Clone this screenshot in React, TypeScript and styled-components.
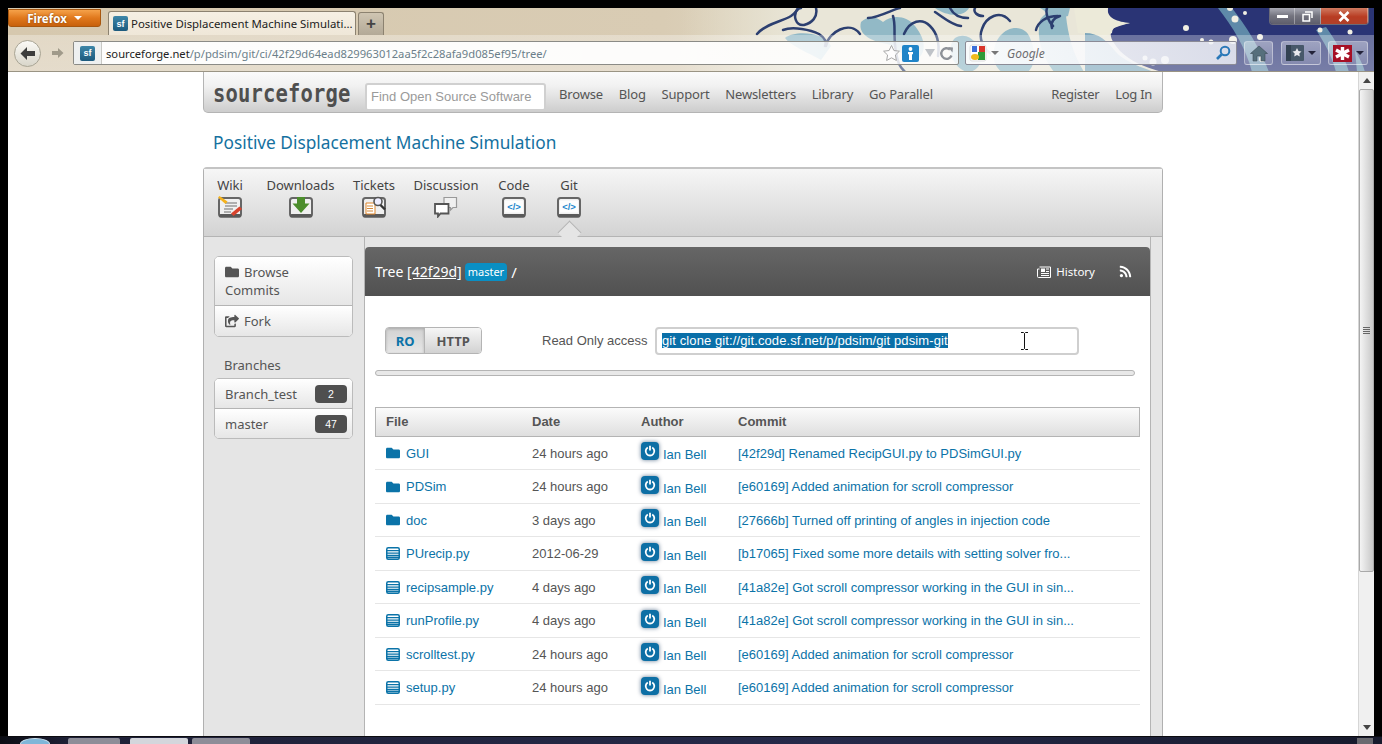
import React from "react";
import styled, { createGlobalStyle } from "styled-components";
import { FaFolder, FaShareSquare, FaRss } from "react-icons/fa";

const Global = createGlobalStyle`
  html, body { margin: 0; padding: 0; width: 1382px; height: 744px; overflow: hidden; background: #000; }
  * { box-sizing: border-box; }
  #root { height: 744px; }
`;
const UB = `"Noto Sans", "Open Sans", sans-serif`;
const AR = `"Liberation Sans", Arial, sans-serif`;

const Frame = styled.div`display:flex;flex-direction:column;height:744px;padding:8px 8px 0;background:#000;`;
const Chrome = styled.header`position:relative;height:64px;flex:none;overflow:hidden;
  background:linear-gradient(90deg,#d6c8ae 0,#d9ccb4 48%,#e0d8c4 58%,#e8e5d6 100%);`;
const Wave = styled.svg`position:absolute;inset:0;width:1366px;height:64px;`;
const TabRow = styled.div`position:relative;display:flex;align-items:flex-start;height:27px;`;
const FirefoxBtn = styled.div`width:93px;height:18px;margin-top:1px;border-radius:0 0 3px 3px;border:1px solid #a8570f;
  background:linear-gradient(#f5a24a,#e0781c 50%,#c8610c);color:#fff;font:bold 11.5px ${UB};display:flex;align-items:center;justify-content:center;gap:7px;
  text-shadow:0 0 2px #7a3d05;`;
const Caret = styled.span<{ $c?: string }>`display:inline-block;width:0;height:0;border-left:4px solid transparent;border-right:4px solid transparent;border-top:4px solid ${p => p.$c || "#fff"};`;
const Tab = styled.div`width:248px;height:24px;margin:3px 0 0 7px;border:1px solid #8c8270;border-bottom:0;border-radius:3px 3px 0 0;
  background:linear-gradient(#f6f0e4,#efe7d8);display:flex;align-items:center;padding-left:4px;gap:3px;font:11.4px ${UB};color:#222;white-space:nowrap;overflow:hidden;`;
const Fav = styled.span`width:15px;height:15px;border-radius:2px;background:linear-gradient(#3d86a8,#1c5a7d);
  color:#fff;font:bold 9px ${AR};display:inline-flex;align-items:center;justify-content:center;flex:none;`;
const NewTab = styled.div`width:26px;height:23px;margin:4px 0 0 2px;border:1px solid #8c8270;border-bottom:0;border-radius:3px 3px 0 0;
  background:linear-gradient(#cfc5b2,#b3a997);color:#444;font:bold 17px ${AR};display:flex;align-items:center;justify-content:center;`;
const WinCtl = styled.div`margin-left:auto;margin-right:5px;width:100px;height:17px;display:flex;border:1px solid #6b6b78;border-top:0;border-radius:0 0 4px 4px;overflow:hidden;`;
const WinBtn = styled.div<{ $w: number; $close?: boolean }>`width:${p => p.$w}px;display:flex;align-items:center;justify-content:center;border-right:1px solid rgba(255,255,255,.35);
  background:${p => p.$close ? "linear-gradient(#d07a60,#b83c22 55%,#b0402a)" : "linear-gradient(#a8a9b4,#74747f 50%,#5e5e6c)"};`;
const NavRow = styled.div`position:relative;height:37px;display:flex;align-items:center;padding:0 7px 0 6px;
  background:linear-gradient(rgba(255,255,255,.3),rgba(255,255,255,.36));border-bottom:1px solid #9a9484;`;
const BackBtn = styled.div`width:27px;height:27px;border-radius:50%;border:1px solid #a9a595;background:linear-gradient(#fbfaf6,#d9d6ca);display:flex;align-items:center;justify-content:center;flex:none;`;
const Forward = styled.div`width:32px;display:flex;justify-content:center;flex:none;`;
const UrlBar = styled.div`width:886px;height:24px;flex:none;border:1px solid #8b8b86;border-radius:2px;background:linear-gradient(90deg,rgba(255,255,255,.95) 0,rgba(255,255,255,.92) 70%,rgba(255,255,255,.78) 85%,rgba(255,255,255,.78) 100%);display:flex;align-items:center;`;
const FavBox = styled.div`width:28px;height:22px;display:flex;align-items:center;justify-content:center;border-right:1px solid #c8c8c4;background:#eef0f0;flex:none;`;
const UrlText = styled.div`margin-left:4px;font:11.2px ${UB};color:#6b7f8a;white-space:nowrap;b{font-weight:400;color:#222;}`;
const UrlTools = styled.div`margin-left:auto;display:flex;align-items:center;gap:1px;padding-right:3px;`;
const SearchBar = styled.div`width:272px;height:24px;margin-left:6px;flex:none;border:1px solid #8b8b96;border-radius:2px;background:linear-gradient(90deg,rgba(255,255,255,.9),rgba(240,242,248,.82));display:flex;align-items:center;padding:0 3px;`;
const SearchLabel = styled.span`font:italic 12px ${UB};color:#6d6d70;margin-left:8px;`;
const ToolBtn = styled.div<{ $w: number; $ml: number }>`width:${p => p.$w}px;height:24px;margin-left:${p => p.$ml}px;flex:none;border:1px solid rgba(255,255,255,.38);border-radius:3px;background:linear-gradient(rgba(255,255,255,.34),rgba(255,255,255,.12));display:flex;align-items:center;justify-content:center;gap:4px;`;

const Viewport = styled.div`flex:1;display:flex;min-height:0;`;
const PageArea = styled.main`flex:1;background:#fff;overflow:hidden;min-width:0;`;
const Container = styled.div`width:960px;margin:0 auto;height:100%;display:flex;flex-direction:column;`;
const SiteBar = styled.div`height:41px;flex:none;display:flex;align-items:center;padding:9px 10px 0 9px;border:1px solid #b4b4b4;border-top:0;border-radius:0 0 5px 5px;
  background:linear-gradient(#fbfbfb,#f1f1f1 35%,#cdcdcd);`;
const Logo = styled.div`width:140px;flex:none;font:bold 20.5px "DejaVu Sans Mono",monospace;letter-spacing:.15px;color:#4f4f4f;transform:scaleY(1.25);white-space:nowrap;line-height:1;margin-top:-7px;`;
const SearchInput = styled.div`width:181px;height:28px;margin-left:12px;flex:none;border:2px solid #d0d0d0;border-radius:3px;background:#fff;font:13px ${AR};color:#9a9a9a;display:flex;align-items:center;padding-left:4px;white-space:nowrap;`;
const SiteNav = styled.nav`display:flex;margin:-5px 0 0 13px;font:13px ${UB};letter-spacing:-.15px;color:#555;gap:15.7px;white-space:nowrap;`;
const SiteNavRight = styled(SiteNav)`margin-left:auto;gap:16px;letter-spacing:-.3px;`;
const Title = styled.h1`margin:0;height:54px;flex:none;padding:18px 0 0 10px;font:400 17.3px/24px ${UB};color:#15719f;white-space:nowrap;`;
const Panel = styled.section`flex:1;display:flex;flex-direction:column;min-height:0;border:1px solid #b0b0b0;border-bottom:0;border-radius:4px 4px 0 0;border-top:2px solid #c4c4c4;`;
const ToolBar = styled.div`position:relative;height:68px;flex:none;display:flex;padding-left:1px;border-bottom:1px solid #b4b4b4;background:linear-gradient(#f6f6f6,#d3d3d3);`;
const ToolTab = styled.div<{ $w: number }>`width:${p => p.$w}px;display:flex;flex-direction:column;align-items:center;padding-top:8px;font:13px/16px ${UB};color:#444;gap:3px;white-space:nowrap;`;
const Notch = styled.div`position:absolute;left:357px;top:55px;width:17px;height:17px;transform:rotate(45deg);background:#e5e5e5;border-left:1px solid #b4b4b4;border-top:1px solid #b4b4b4;`;
const PanelBody = styled.div`flex:1;display:flex;min-height:0;background:#e5e5e5;`;
const Side = styled.aside`width:161px;flex:none;padding:19px 11px 0 10px;display:flex;flex-direction:column;border-right:1px solid #b4b4b4;`;
const SideBox = styled.div`border:1px solid #bbb;border-radius:5px;overflow:hidden;background:#fff;`;
const SideItem = styled.div<{ $pr?: number }>`padding:6px ${p => p.$pr ?? 10}px 6px 10px;font:13px/18px ${UB};color:#555;background:linear-gradient(#fff,#e6e6e6);border-top:1px solid #b4b4b4;&:first-child{border-top:0;}
  svg{vertical-align:-2px;margin-right:5px;color:#555;}`;
const SideLabel = styled.div`font:13px/18px ${UB};color:#555;margin:19px 0 4px 10px;`;
const BranchItem = styled.div`height:30px;padding:0 5px 0 10px;display:flex;align-items:center;justify-content:space-between;font:13px ${UB};color:#555;background:linear-gradient(#fff,#e6e6e6);border-top:1px solid #b4b4b4;&:first-child{border-top:0;height:29px;}`;
const Badge = styled.span`width:32px;height:18px;border-radius:4px;background:#4f4f4f;color:#fff;font:10.5px ${AR};display:flex;align-items:center;justify-content:center;`;
const Main = styled.div`width:785px;flex:none;margin-top:10px;background:#fff;border-radius:4px 4px 0 0;display:flex;flex-direction:column;`;
const MainHead = styled.div`height:49px;flex:none;display:flex;align-items:center;padding:0 18px 0 10px;border-radius:4px 4px 0 0;background:linear-gradient(#666,#515151);color:#fff;font:14px ${UB};white-space:pre;`;
const Ref = styled.span`text-decoration:underline;`;
const MasterTag = styled.span`margin:0 4px 0 3px;height:18px;padding:0 3px;border-radius:4px;background:#0a8fc4;font:11px/18px ${UB};display:inline-block;`;
const Slash = styled.span`font-size:15px;`;
const History = styled.span`margin-left:auto;display:flex;align-items:center;gap:5px;font:11.5px ${UB};`;
const RssWrap = styled.span`margin-left:24px;display:flex;`;
const Gutter = styled.div`flex:1;border-left:1px solid #b4b4b4;`;
const CloneRow = styled.div`display:flex;align-items:center;margin:30px 0 0 20px;height:29px;`;
const BtnGroup = styled.div`display:flex;width:97px;height:27px;border:1px solid #b4b4b4;border-radius:4px;overflow:hidden;font:bold 13px ${UB};`;
const Toggle = styled.div<{ $on?: boolean }>`display:flex;align-items:center;justify-content:center;width:${p => p.$on ? 40 : 57}px;
  color:${p => p.$on ? "#0b73a8" : "#555"};background:${p => p.$on ? "linear-gradient(#d2d2d2,#e6e6e6)" : "linear-gradient(#f6f6f6,#d2d2d2)"};${p => p.$on ? "border-right:1px solid #b4b4b4;box-shadow:inset 0 1px 3px rgba(0,0,0,.2);" : ""}`;
const CloneLabel = styled.span`margin-left:60px;font:13px ${AR};color:#555;white-space:nowrap;width:113px;`;
const CloneInput = styled.div`position:relative;width:424px;height:28px;border:2px solid #cfcfcf;border-radius:4px;background:#fff;display:flex;align-items:center;padding-left:5px;`;
const Selected = styled.span`background:#0a6fa8;color:#fff;font:13px/15px ${AR};white-space:nowrap;letter-spacing:.1px;`;
const IBeam = styled.svg`position:absolute;left:363px;top:3px;`;
const Bar = styled.div`margin:15px 15px 0 10px;height:6px;border:1px solid #b4b4b4;border-radius:3px;background:#e8e8e8;flex:none;`;
const Table = styled.div`margin:31px 10px 0 10px;display:flex;flex-direction:column;`;
const cols = `grid-template-columns:146px 109px 97px 1fr;`;
const HeadRow = styled.div`display:grid;${cols}height:30px;padding-bottom:2px;border:1px solid #b4b4b4;background:linear-gradient(#fbfbfb,#dfdfdf);align-items:center;font:bold 13px ${AR};color:#555;`;
const HeadCell = styled.div`padding-left:10px;`;
const Row = styled.div<{ $h: number }>`display:grid;${cols}height:${p => p.$h}px;border-bottom:1px solid #e6e6e6;align-items:center;font:13px ${AR};padding-left:1px;`;
const NameCell = styled.div`display:flex;align-items:center;gap:6px;padding-left:10px;color:#0b73a8;svg{flex:none;}`;
const DateCell = styled.div`padding-left:10px;color:#555;`;
const AuthorCell = styled.div`display:flex;align-items:flex-start;padding-left:10px;color:#0b73a8;gap:4px;`;
const Avatar = styled.span`width:18px;height:18px;border-radius:4px;background:#0d6fa5;box-shadow:0 0 4px rgba(0,40,80,.6);display:flex;align-items:center;justify-content:center;flex:none;margin-top:-2px;`;
const AuthorName = styled.span`margin-top:4px;line-height:14px;`;
const CommitCell = styled.div`padding-left:10px;color:#0b73a8;white-space:nowrap;`;
const Scroll = styled.div`width:16px;flex:none;background:#f0f0f0;border-left:1px solid #d6d6d6;display:flex;flex-direction:column;align-items:center;`;
const ScrollCap = styled.div`height:17px;flex:none;display:flex;align-items:center;justify-content:center;`;
const Thumb = styled.div`width:15px;height:483px;flex:none;border:1px solid #a9a9a9;border-radius:2px;background:linear-gradient(90deg,#f4f4f4,#dcdcdc 55%,#c8c8c8);display:flex;align-items:center;justify-content:center;`;
const Track = styled.div`flex:1;`;
const Grip = styled.span`width:7px;height:7px;background:repeating-linear-gradient(#666 0 1px,transparent 1px 2px);`;
const Taskbar = styled.footer`height:8px;flex:none;margin:0 -8px;padding-left:8px;background:linear-gradient(90deg,#0b0d14 0,#1e2036 5%,#262a4a 60%,#171a2c 100%);border-top:1px solid #0c0c10;display:flex;align-items:flex-start;position:relative;`;
const Orb = styled.div`width:30px;height:12px;margin:1px 0 0 12px;border-radius:50% 50% 0 0;background:#7fb6d8;border:1px solid #cfe3ef;flex:none;`;
const TaskBtn = styled.div<{ $w: number; $ml: number; $on?: boolean }>`width:${p => p.$w}px;height:6px;margin:1px 0 0 ${p => p.$ml}px;flex:none;border-radius:2px 2px 0 0;background:${p => p.$on ? "#d4d6dc" : "#8d8d98"};`;
const TaskEnd = styled.div`margin:1px 9px 0 auto;width:16px;height:6px;background:#6a6a70;`;

const Ic = { display: "block" } as const;

const TabFrame = ({ children }: { children: React.ReactNode }) => (
  <svg width="24" height="22" viewBox="0 0 24 22" style={Ic}>
    <rect x="1" y="2" width="22" height="18.500" rx="2.500" fill="#f0f0f0" stroke="#666" strokeWidth="2" />
    <rect x="1" y="18" width="22" height="3.500" rx="1.500" fill="#5a5a5a" />
    {children}
  </svg>
);
const WikiIcon = () => (
  <TabFrame>
    <path d="M7 7h12M7 10h12M6 13h9M6 16h7" stroke="#999" strokeWidth="1.500" />
    <path d="M0 1.500l1.500-1.500 8 5.500-2 2.500z" fill="#f5b21c" />
    <path d="M13 17.500l8.500-7 2.500 2.500-8.500 7z" fill="#d8432d" />
  </TabFrame>
);
const DlIcon = () => (
  <TabFrame>
    <path d="M8 1h8v6.500h4.500L12 17 3.500 7.500H8z" fill="#4c8d2c" />
  </TabFrame>
);
const TicketIcon = () => (
  <TabFrame>
    <path d="M4 7h9v11H4z" fill="#fff" stroke="#e0862a" strokeWidth="1" />
    <path d="M5 10h6M5 12.500h6M5 15h6" stroke="#d68a3a" strokeWidth="1.200" />
    <circle cx="16" cy="5.500" r="4" fill="#eef" stroke="#555" strokeWidth="1.600" />
    <path d="M18.500 9l4.500 4.500" stroke="#333" strokeWidth="2.400" />
  </TabFrame>
);
const ChatIcon = () => (
  <svg width="24" height="22" viewBox="0 0 24 22" style={Ic}>
    <path d="M10 1.500h12.500v10h-3.500l-2.500 2.500v-2.500h-6.500z" fill="#f0f0f0" stroke="#999" strokeWidth="1.200" />
    <path d="M1 8h13.500v9.500h-8l-2.500 3v-3h-3z" fill="#fff" stroke="#555" strokeWidth="1.800" />
  </svg>
);
const CodeIcon = () => (
  <TabFrame>
    <rect x="3" y="4.500" width="18" height="12" fill="#fdfdfd" />
    <text x="12" y="14" textAnchor="middle" fontFamily="Liberation Sans" fontWeight="700" fontSize="9.500" fill="#1a86cc">&lt;/&gt;</text>
  </TabFrame>
);
const FileIcon = () => (
  <svg width="14" height="13" viewBox="0 0 14 13" style={Ic}>
    <rect x=".75" y=".75" width="12.500" height="11.500" rx="1.500" fill="#fff" stroke="#0b73a8" strokeWidth="1.500" />
    <path d="M1 3.700h12M1 6.200h12M1 8.500h12M1 10.500h12" stroke="#0b73a8" strokeWidth="1.300" />
  </svg>
);
const Power = () => (
  <svg width="12" height="12" viewBox="0 0 12 12" style={Ic}>
    <path d="M3.800 2.500a4.300 4.300 0 1 0 4.400 0" fill="none" stroke="#fff" strokeWidth="1.800" />
    <path d="M6 .8v4.600" stroke="#fff" strokeWidth="1.800" />
  </svg>
);
const HistoryIcon = () => (
  <svg width="14" height="12" viewBox="0 0 14 12" style={Ic}>
    <path d="M2.500 1h11v10.500h-12a1 1 0 0 1-1-1V3h2" fill="none" stroke="#fff" />
    <rect x="4" y="2.500" width="4" height="3.500" fill="#fff" />
    <path d="M9 3h3M9 5.500h3M4 7.500h8M4 9.500h8" stroke="#fff" />
  </svg>
);

type Entry = { n: string; dir?: boolean; d: string; c: string; h: number };
const rows: Entry[] = [
  { n: "GUI", dir: true, d: "24 hours ago", c: "[42f29d] Renamed RecipGUI.py to PDSimGUI.py", h: 33 },
  { n: "PDSim", dir: true, d: "24 hours ago", c: "[e60169] Added animation for scroll compressor", h: 34 },
  { n: "doc", dir: true, d: "3 days ago", c: "[27666b] Turned off printing of angles in injection code", h: 33 },
  { n: "PUrecip.py", d: "2012-06-29", c: "[b17065] Fixed some more details with setting solver fro...", h: 34 },
  { n: "recipsample.py", d: "4 days ago", c: "[41a82e] Got scroll compressor working in the GUI in sin...", h: 33 },
  { n: "runProfile.py", d: "4 days ago", c: "[41a82e] Got scroll compressor working in the GUI in sin...", h: 34 },
  { n: "scrolltest.py", d: "24 hours ago", c: "[e60169] Added animation for scroll compressor", h: 33 },
  { n: "setup.py", d: "24 hours ago", c: "[e60169] Added animation for scroll compressor", h: 34 },
];

const WaveArt = () => (
  <Wave viewBox="8 8 1366 64" preserveAspectRatio="none">
    <defs>
      <linearGradient id="fade" x1="0" x2="1"><stop offset="0" stopColor="#e6e1cf" stopOpacity="0" /><stop offset="1" stopColor="#e9e6d8" /></linearGradient>
    </defs>
    <rect x="680" y="8" width="120" height="64" fill="url(#fade)" />
    <rect x="800" y="8" width="340" height="64" fill="#e9e6d8" />
    <g fill="#92b9c6">
      <path d="M861 22c8-8 18-4 22 0 10-8 24-6 32 4 8 10 14 24 2 34-8 4-20-14-30-16-12-2-30-8-26-22z" />
      <path d="M935 8c14 10 30 8 34 0z" />
      <path d="M955 38c14-8 26 8 26 20 0 8-6 14-14 14-14-4-22-24-12-34z" />
      <path d="M1000 36c10-12 26-10 30 2 6 14 6 26-2 34h-26c-12-8-10-26-2-36z" />
      <path d="M1040 20c4-8 16-12 26-4 2 18 6 36 18 56h-30c-12-16-18-34-14-52z" />
      <path d="M1040 8c8 4 10 14 28 8l2-8z" />
      <path d="M785 38c10-8 40-6 46 8l-10 14c-14-8-30-14-36-22z" />
    </g>
    <path d="M1108 8c-2 8 4 14 10 16l12-1c-8 2-14 4-18 6-4 8 2 14 8 22 10 10 24 16 42 21h212V8z" fill="#2a3475" />
    <path d="M1074 8h34c-2 10 10 14 22 15-10 2-18 3-18 10l-8 4-26-4z" fill="#ecead9" />
    <path d="M1085 33c14 0 22 8 30 18 8 10 30 18 40 21h-70z" fill="#7ea7bc" />
    <path d="M1218 8h14c14 18 28 40 37 64h-17c-6-24-20-46-34-64z" fill="#5f8aa9" />
    <path d="M1316 30l10-3c10 14 18 28 23 45h-13c-4-16-12-30-20-42z" fill="#5f8aa9" />
    <path d="M1355 50c4 8 8 14 10 22h-8z" fill="#5f8aa9" />
    <g fill="#f1efe3">
      <circle cx="1186" cy="28" r="3" /><circle cx="1235" cy="19" r="3.500" /><circle cx="1211" cy="42" r="2.500" /><circle cx="1202" cy="40" r="2" />
      <circle cx="1320" cy="30" r="2.500" /><circle cx="1350" cy="32" r="2.500" /><circle cx="1245" cy="13" r="2" />
      <circle cx="1260" cy="37" r="3" /><circle cx="1233" cy="40" r="4" /><circle cx="1262" cy="59" r="3" />
      <circle cx="1165" cy="60" r="4" /><circle cx="1153" cy="62" r="3.500" /><circle cx="1145" cy="58" r="2.500" />
      <circle cx="1230" cy="8" r="3" />
    </g>
    <g fill="none" stroke="#2c3f70" strokeWidth="2.500" strokeLinecap="round">
      <path d="M757 34c8-10 24-12 34-18 6-4 6-8 10-8" />
      <path d="M798 8c-6 8-2 18 6 17 8-2 14-8 12-17" />
      <path d="M826 46c2-14 24-26 34-12" />
      <path d="M783 30c10-4 28 0 36 4 6 4 8 8 6 12" />
      <path d="M868 18c10 0 28-10 32-10" />
      <path d="M893 16c4 12-2 26 6 48 2 4 4 6 6 8" />
      <path d="M904 34c6-14 18-16 26-8 6 6 10 16 8 30" />
      <path d="M950 8c4 8 12 10 18 10M975 8c-2 4 2 8 8 8" />
      <path d="M1010 21c-10-12-24-4-28 8-4 10 2 20 8 24" />
      <path d="M1036 30c2-8 10-14 22-14M1052 28c-2-6 2-10 8-12" />
      <path d="M935 12c6 4 18 14 26 14" />
      <path d="M1047 8c-2 6 2 14 6 18" />
    </g>
  </Wave>
);

export default function App() {
  return (
    <>
      <Global />
      <Frame>
        <Chrome>
          <WaveArt />
          <TabRow>
            <FirefoxBtn>Firefox <Caret /></FirefoxBtn>
            <Tab><Fav>sf</Fav>Positive Displacement Machine Simulati...</Tab>
            <NewTab>+</NewTab>
            <WinCtl>
              <WinBtn $w={26}>
                <svg width="11" height="4"><rect width="11" height="3" y="1" fill="#fff" /></svg>
              </WinBtn>
              <WinBtn $w={26}>
                <svg width="11" height="11" viewBox="0 0 11 11"><path d="M3 1h7v6M1 3.500h6.500V10H1z" fill="none" stroke="#fff" strokeWidth="1.500" /></svg>
              </WinBtn>
              <WinBtn $w={48} $close>
                <svg width="12" height="11" viewBox="0 0 12 11"><path d="M1.500 1l9 9M10.500 1l-9 9" stroke="#fff" strokeWidth="2.600" /></svg>
              </WinBtn>
            </WinCtl>
          </TabRow>
          <NavRow>
            <BackBtn>
              <svg width="17" height="15" viewBox="0 0 17 15"><path d="M8 1L1.500 7.500 8 14v-4h8V5H8z" fill="#3d3d3d" /></svg>
            </BackBtn>
            <Forward>
              <svg width="13" height="12" viewBox="0 0 13 12"><path d="M7 1l5.500 5L7 11V8H1V4h6z" fill="#a09a8a" /></svg>
            </Forward>
            <UrlBar>
              <FavBox><Fav>sf</Fav></FavBox>
              <UrlText><b>sourceforge.net</b>/p/pdsim/git/ci/42f29d64ead829963012aa5f2c28afa9d085ef95/tree/</UrlText>
              <UrlTools>
                <svg width="19" height="18" viewBox="0 0 19 18"><path d="M9.500 1.500l2.400 5 5.500.7-4 3.800 1 5.500-4.900-2.700-4.900 2.700 1-5.500-4-3.800 5.500-.7z" fill="rgba(255,255,255,.6)" stroke="#a8a8a8" /></svg>
                <svg width="17" height="17" viewBox="0 0 17 17"><rect width="17" height="17" rx="2" fill="#1f84c8" /><circle cx="8.500" cy="4" r="1.900" fill="#fff" /><path d="M6 7h5v2l-1 .5V15H7V9.500L6 9z" fill="#fff" /></svg>
                <svg width="12" height="8" viewBox="0 0 12 8" style={{ marginLeft: 4 }}><path d="M1 0h10L6 8z" fill="#bfc3c8" /></svg>
                <svg width="16" height="15" viewBox="0 0 16 15" style={{ marginLeft: 2 }}><path d="M12.500 9.500A5.300 5.300 0 1 1 11 3.500" fill="none" stroke="#8e9298" strokeWidth="2.400" /><path d="M9 1l5 .5-.5 5z" fill="#8e9298" /></svg>
              </UrlTools>
            </UrlBar>
            <SearchBar>
              <svg width="18" height="18" viewBox="0 0 18 18">
                <rect x="1" y="1" width="16" height="16" rx="2" fill="#fff" stroke="#ddd" />
                <rect x="3" y="2" width="5" height="6" fill="#3a6fd8" /><rect x="10" y="2" width="6" height="6" fill="#d8342b" />
                <rect x="9" y="8" width="7" height="8" fill="#2e9a38" /><ellipse cx="6" cy="13" rx="4" ry="3" fill="#f0bb1c" />
              </svg>
              <span style={{ marginLeft: 4, display: "inline-flex" }}><Caret $c="#777" /></span>
              <SearchLabel>Google</SearchLabel>
              <svg width="16" height="16" viewBox="0 0 16 16" style={{ marginLeft: "auto", marginRight: 2 }}><circle cx="10" cy="6" r="4.300" fill="none" stroke="#2a78b8" strokeWidth="2" /><path d="M6.500 9.500L2 14" stroke="#2a78b8" strokeWidth="2.600" /></svg>
            </SearchBar>
            <ToolBtn $w={29} $ml={7}>
              <svg width="18" height="17" viewBox="0 0 18 17"><path d="M9 1L.5 8.500H3V16h4v-5h4v5h4V8.500h2.500z" fill="#566f7c" stroke="#3d4c55" strokeWidth=".6" /></svg>
            </ToolBtn>
            <ToolBtn $w={40} $ml={8}>
              <svg width="18" height="16" viewBox="0 0 18 16"><rect width="18" height="16" rx="1" fill="#47586a" /><rect width="5" height="16" fill="#334252" /><path d="M11 3l1.500 3 3 .4-2.200 2.100.5 3-2.800-1.500-2.800 1.500.5-3-2.200-2.100 3-.4z" fill="#e8e8ee" /></svg>
              <Caret $c="#23233a" />
            </ToolBtn>
            <ToolBtn $w={40} $ml={7}>
              <svg width="19" height="17" viewBox="0 0 19 17"><rect width="19" height="17" fill="#a61025" /><path d="M9.500 2v13M3 5l13 7M16 5L3 12" stroke="#fff" strokeWidth="3.400" /></svg>
              <Caret $c="#23233a" />
            </ToolBtn>
          </NavRow>
        </Chrome>
        <Viewport>
          <PageArea>
            <Container>
              <SiteBar>
                <Logo>sourceforge</Logo>
                <SearchInput>Find Open Source Software</SearchInput>
                <SiteNav>
                  <span>Browse</span><span>Blog</span><span>Support</span><span>Newsletters</span><span>Library</span><span>Go Parallel</span>
                </SiteNav>
                <SiteNavRight><span>Register</span><span>Log In</span></SiteNavRight>
              </SiteBar>
              <Title>Positive Displacement Machine Simulation</Title>
              <Panel>
                <ToolBar>
                  <ToolTab $w={50}>Wiki<WikiIcon /></ToolTab>
                  <ToolTab $w={91}>Downloads<DlIcon /></ToolTab>
                  <ToolTab $w={56}>Tickets<TicketIcon /></ToolTab>
                  <ToolTab $w={88}>Discussion<ChatIcon /></ToolTab>
                  <ToolTab $w={48}>Code<CodeIcon /></ToolTab>
                  <ToolTab $w={62}>Git<CodeIcon /></ToolTab>
                  <Notch />
                </ToolBar>
                <PanelBody>
                  <Side>
                    <SideBox>
                      <SideItem $pr={40}><FaFolder size={14} />Browse Commits</SideItem>
                      <SideItem><FaShareSquare size={14} />Fork</SideItem>
                    </SideBox>
                    <SideLabel>Branches</SideLabel>
                    <SideBox>
                      <BranchItem>Branch_test<Badge>2</Badge></BranchItem>
                      <BranchItem>master<Badge>47</Badge></BranchItem>
                    </SideBox>
                  </Side>
                  <Main>
                    <MainHead>
                      Tree <Ref>[42f29d]</Ref><MasterTag>master</MasterTag><Slash>/</Slash>
                      <History><HistoryIcon />History</History>
                      <RssWrap><FaRss size={13} /></RssWrap>
                    </MainHead>
                    <CloneRow>
                      <BtnGroup><Toggle $on>RO</Toggle><Toggle>HTTP</Toggle></BtnGroup>
                      <CloneLabel>Read Only access</CloneLabel>
                      <CloneInput>
                        <Selected>git clone git://git.code.sf.net/p/pdsim/git pdsim-git</Selected>
                        <IBeam width="9" height="18" viewBox="0 0 9 18"><path d="M1 .5h2.500L4.500 1.500 5.500.5H8M4.500 1.500v15M1 17.500h2.500l1-1 1 1H8" fill="none" stroke="#111" /></IBeam>
                      </CloneInput>
                    </CloneRow>
                    <Bar />
                    <Table>
                      <HeadRow><HeadCell>File</HeadCell><HeadCell>Date</HeadCell><HeadCell>Author</HeadCell><HeadCell>Commit</HeadCell></HeadRow>
                      {rows.map(r => (
                        <Row key={r.n} $h={r.h}>
                          <NameCell>{r.dir ? <FaFolder size={14} /> : <FileIcon />}{r.n}</NameCell>
                          <DateCell>{r.d}</DateCell>
                          <AuthorCell><Avatar><Power /></Avatar><AuthorName>Ian Bell</AuthorName></AuthorCell>
                          <CommitCell>{r.c}</CommitCell>
                        </Row>
                      ))}
                    </Table>
                  </Main>
                  <Gutter />
                </PanelBody>
              </Panel>
            </Container>
          </PageArea>
          <Scroll>
            <ScrollCap><svg width="8" height="5"><path d="M4 0l4 5H0z" fill="#444" /></svg></ScrollCap>
            <Thumb><Grip /></Thumb>
            <Track />
            <ScrollCap><svg width="8" height="5"><path d="M4 5L0 0h8z" fill="#444" /></svg></ScrollCap>
          </Scroll>
        </Viewport>
        <Taskbar>
          <Orb />
          <TaskBtn $w={52} $ml={18} />
          <TaskBtn $w={58} $ml={10} $on />
          <TaskBtn $w={58} $ml={4} />
          <TaskEnd />
        </Taskbar>
      </Frame>
    </>
  );
}
